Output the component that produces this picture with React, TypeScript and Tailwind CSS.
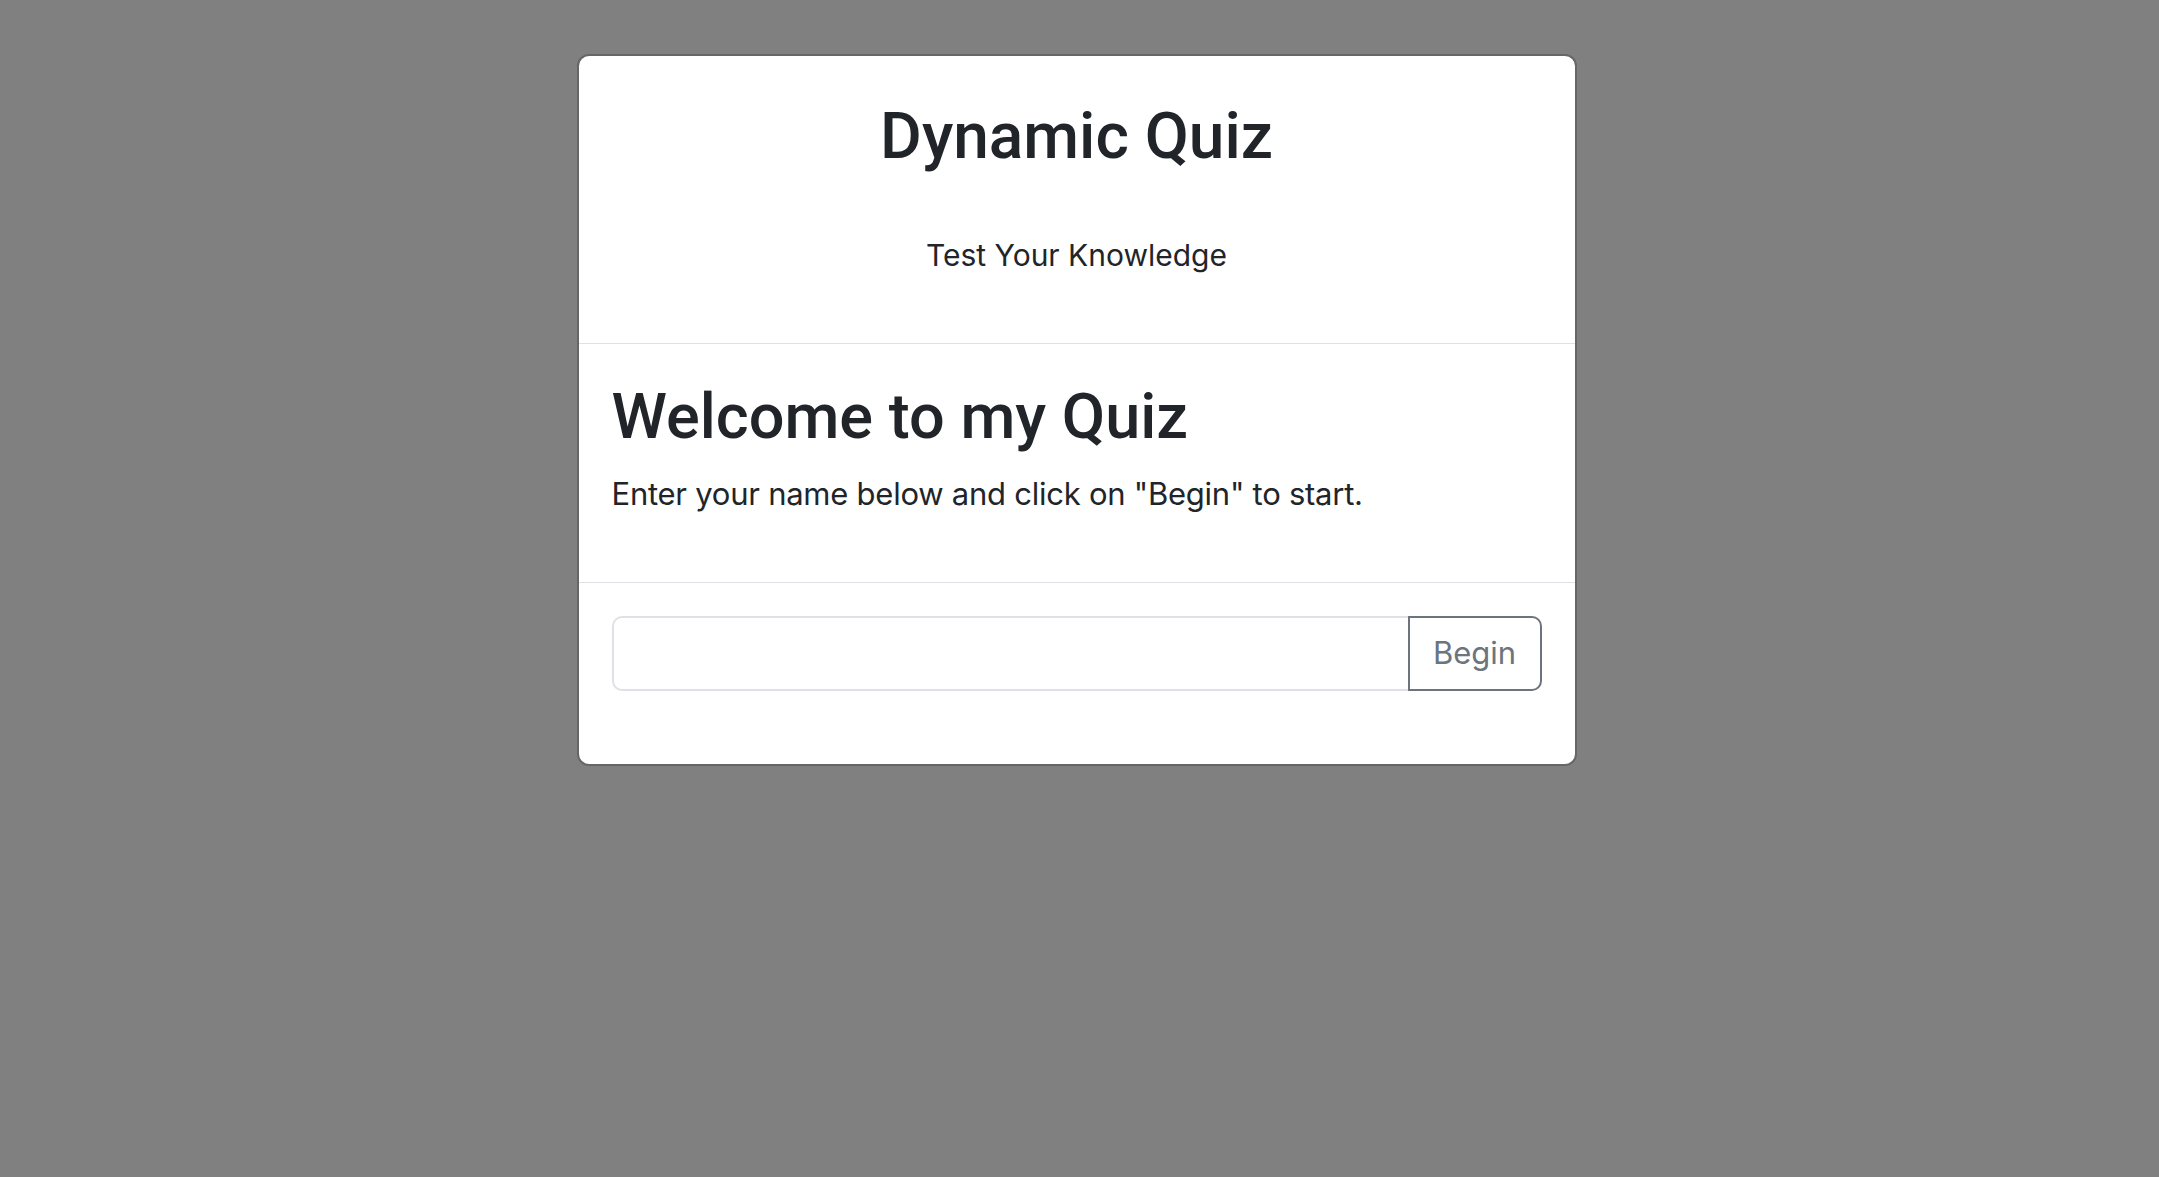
import React from "react";

export default function App() {
  return (
    <div
      className="flex min-h-[1177px] w-full justify-center bg-[#808080] pt-[54px] pr-[6px]"
      style={{ fontFamily: 'Inter, "Noto Sans", sans-serif' }}
    >
      <div className="h-fit w-[1000px] overflow-hidden rounded-[12px] border-2 border-[#666666] bg-white text-[#212529]">
        <div className="flex flex-col items-center border-b border-[#dee2e6] pt-[43px] pb-[65px]">
          <h1 className="text-[64px] font-medium leading-[1.2]" style={{ fontFamily: 'Roboto, sans-serif' }}>Dynamic Quiz</h1>
          <p className="mt-[57px] text-[30px] leading-[1.5]">Test Your Knowledge</p>
        </div>
        <div className="border-b border-[#dee2e6] px-[33px] pt-[35px] pb-[64px]">
          <h2 className="text-[63px] font-medium leading-[1.2]" style={{ fontFamily: 'Roboto, sans-serif' }}>Welcome to my Quiz</h2>
          <p className="mt-[17px] text-[31px] leading-[1.5] tracking-[-0.008em]">
            Enter your name below and click on "Begin" to start.
          </p>
        </div>
        <div className="px-[33px] pt-[33px] pb-[73px]">
          <div className="flex h-[75px]">
            <input
              type="text"
              className="h-full flex-1 rounded-l-[10px] border-2 border-r-0 border-[#dee2e6] px-4 text-[30px] outline-none"
            />
            <button className="h-full w-[134px] rounded-r-[10px] border-2 border-[#6c757d] text-[31px] text-[#6c757d]">
              Begin
            </button>
          </div>
        </div>
      </div>
    </div>
  );
}
